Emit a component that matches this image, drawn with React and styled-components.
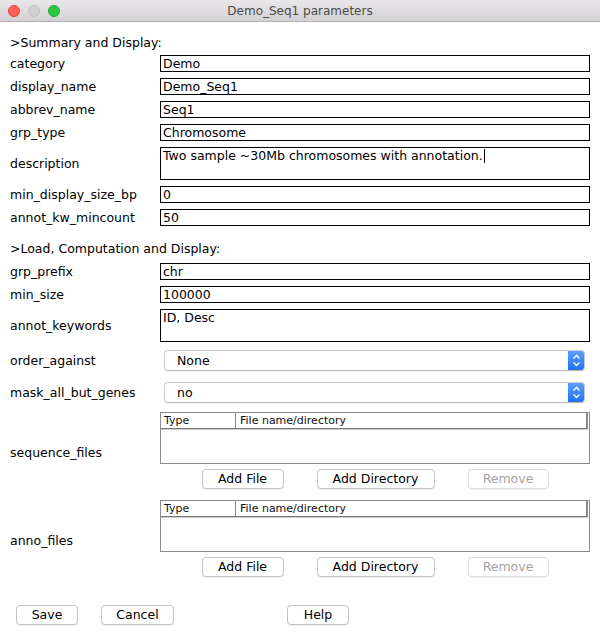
import React from 'react';
import styled, { createGlobalStyle } from 'styled-components';

const GlobalStyle = createGlobalStyle`
  html, body {
    margin: 0;
    padding: 0;
    background: #fff;
  }
  body {
    font-family: "DejaVu Sans", "Liberation Sans", sans-serif;
    color: #000;
  }
`;

export const Window = styled.div`
  width: 600px;
  height: 635px;
  background: #fff;
  overflow: hidden;
`;
export const TitleBar = styled.div`
  height: 22px;
  box-sizing: border-box;
  display: grid;
  grid-template-columns: 1fr auto 1fr;
  align-items: center;
  background: linear-gradient(#e9e7e9, #d3d1d3);
  border-bottom: 1px solid #b4b2b4;
`;
export const Lights = styled.div`
  display: flex;
  gap: 8px;
  padding-left: 8px;
`;
export const Light = styled.span`
  width: 12px;
  height: 12px;
  box-sizing: border-box;
  border-radius: 50%;
  background: ${(p) => p.$fill};
  border: 1px solid ${(p) => p.$edge};
`;
export const Title = styled.div`
  font-size: 12px;
  color: #4a4a4a;
  line-height: 16px;
`;
export const Content = styled.div`
  padding: 13px 10px 0 10px;
`;
export const SectionTitle = styled.div`
  font-size: 12.5px;
  line-height: 16px;
  height: 16px;
  margin-top: ${(p) => p.$top || 0}px;
  margin-bottom: ${(p) => p.$bottom || 0}px;
`;
export const FormGrid = styled.div`
  display: grid;
  grid-template-columns: 150px 430px;
  row-gap: 6px;
  align-items: center;
`;
export const Label = styled.div`
  font-size: 12.5px;
  line-height: 16px;
  white-space: nowrap;
`;
export const TextField = styled.div`
  height: ${(p) => (p.$multi ? 33 : 17)}px;
  box-sizing: border-box;
  border: 1px solid #000;
  padding: 0 2px;
  font-size: 12.5px;
  line-height: 15px;
  white-space: nowrap;
  overflow: hidden;
`;
export const Caret = styled.span`
  display: inline-block;
  width: 1px;
  height: 14px;
  margin-left: 1px;
  background: #000;
  vertical-align: -3px;
`;
export const Select = styled.div`
  height: 21px;
  margin: 2px 5px 3px 4px;
  box-sizing: border-box;
  display: flex;
  align-items: center;
  border: 1px solid #cbcbcb;
  border-bottom-color: #b9b9b9;
  border-radius: 4px;
  background: #fff;
  box-shadow: 0 1px 0 rgba(0, 0, 0, 0.04);
  overflow: hidden;
`;
export const SelectValue = styled.span`
  flex: 1;
  padding-left: 12px;
  font-size: 12.5px;
  line-height: 16px;
`;
export const Stepper = styled.span`
  width: 17px;
  height: 21px;
  margin: -1px -1px -1px 0;
  display: flex;
  align-items: center;
  justify-content: center;
  background: linear-gradient(#5fa2fb, #1c6ef2);
  border-radius: 0 4px 4px 0;
`;
export const FileBlock = styled.div`
  padding-bottom: 5px;
`;
export const FileTable = styled.div`
  height: 52px;
  box-sizing: border-box;
  border: 1px solid #8d8d8d;
  background: #fff;
`;
export const TableHeader = styled.div`
  display: grid;
  grid-template-columns: 75px 1fr;
  height: 16px;
  box-sizing: border-box;
  margin-right: 1px;
  border-bottom: 1px solid #777;
  border-right: 2px solid #8a8a8a;
  box-shadow: 0 1px 0 #cfcfcf;
`;
export const HeaderCell = styled.div`
  font-size: 11px;
  line-height: 15px;
  padding-left: ${(p) => (p.$first ? 3 : 4)}px;
  color: #111;
  border-right: ${(p) => (p.$first ? '1px solid #8a8a8a' : 'none')};
`;
export const ButtonRow = styled.div`
  display: flex;
  justify-content: center;
  gap: 33px;
  margin-top: 5px;
`;
export const Button = styled.button`
  width: ${(p) => p.$w}px;
  height: 20px;
  box-sizing: border-box;
  padding: 0;
  border: 1px solid ${(p) => (p.disabled ? '#dcdcdc' : '#c2c2c2')};
  border-radius: 4px;
  background: #fff;
  box-shadow: 0 1px 0 rgba(0, 0, 0, 0.05);
  font-family: "DejaVu Sans", "Liberation Sans", sans-serif;
  font-size: 12.5px;
  line-height: 16px;
  color: ${(p) => (p.disabled ? '#a3a3a3' : '#000')};
`;
export const BottomBar = styled.div`
  display: flex;
  gap: 23px;
  padding-left: 6px;
  margin-top: 23px;
`;
export const Spacer = styled.span`
  width: 67px;
`;

const StepperIcon = () => (
  <svg width="9" height="13" viewBox="0 0 9 13">
    <path d="M1.5 4.5 L4.5 1.5 L7.5 4.5" fill="none" stroke="#fff" strokeWidth="1.4" />
    <path d="M1.5 8.5 L4.5 11.5 L7.5 8.5" fill="none" stroke="#fff" strokeWidth="1.4" />
  </svg>
);

const Field = ({ label, value, multi, caret }) => (
  <>
    <Label>{label}</Label>
    <TextField $multi={multi}>
      {value}
      {caret && <Caret />}
    </TextField>
  </>
);

const Dropdown = ({ label, value }) => (
  <>
    <Label>{label}</Label>
    <Select>
      <SelectValue>{value}</SelectValue>
      <Stepper>
        <StepperIcon />
      </Stepper>
    </Select>
  </>
);

const FileList = ({ label }) => (
  <>
    <Label>{label}</Label>
    <FileBlock>
      <FileTable>
        <TableHeader>
          <HeaderCell $first>Type</HeaderCell>
          <HeaderCell>File name/directory</HeaderCell>
        </TableHeader>
      </FileTable>
      <ButtonRow>
        <Button $w={82}>Add File</Button>
        <Button $w={118}>Add Directory</Button>
        <Button $w={81} disabled>Remove</Button>
      </ButtonRow>
    </FileBlock>
  </>
);

const App = () => (
  <Window>
    <GlobalStyle />
    <TitleBar>
      <Lights>
        <Light $fill="#fc5f57" $edge="#e0443e" />
        <Light $fill="#d0d0d0" $edge="#c0c0c0" />
        <Light $fill="#2bc740" $edge="#1eab31" />
      </Lights>
      <Title>Demo_Seq1 parameters</Title>
      <span />
    </TitleBar>
    <Content>
      <SectionTitle $bottom={4}>&gt;Summary and Display:</SectionTitle>
      <FormGrid>
        <Field label="category" value="Demo" />
        <Field label="display_name" value="Demo_Seq1" />
        <Field label="abbrev_name" value="Seq1" />
        <Field label="grp_type" value="Chromosome" />
        <Field label="description" value="Two sample ~30Mb chromosomes with annotation." multi caret />
        <Field label="min_display_size_bp" value="0" />
        <Field label="annot_kw_mincount" value="50" />
      </FormGrid>
      <SectionTitle $top={15} $bottom={6}>&gt;Load, Computation and Display:</SectionTitle>
      <FormGrid>
        <Field label="grp_prefix" value="chr" />
        <Field label="min_size" value="100000" />
        <Field label="annot_keywords" value="ID, Desc" multi />
        <Dropdown label="order_against" value="None" />
        <Dropdown label="mask_all_but_genes" value="no" />
        <FileList label="sequence_files" />
        <FileList label="anno_files" />
      </FormGrid>
      <BottomBar>
        <Button $w={62}>Save</Button>
        <Button $w={73}>Cancel</Button>
        <Spacer />
        <Button $w={62}>Help</Button>
      </BottomBar>
    </Content>
  </Window>
);

export default App;
